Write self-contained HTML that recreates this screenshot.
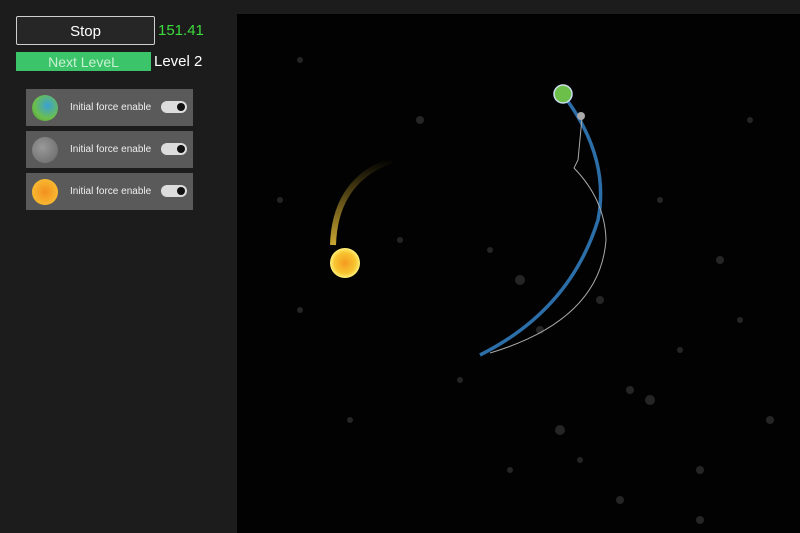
<!DOCTYPE html>
<html><head><style>
body{margin:0;width:800px;height:533px;background:#1c1c1c;position:relative;overflow:hidden;font-family:"Liberation Sans",sans-serif}
.canvas{position:absolute;left:237px;top:14px;width:563px;height:519px;background:#020202}
.stop{position:absolute;left:16px;top:16px;width:137px;height:27px;border:1px solid #cfcfcf;border-radius:2px;background:#262626;color:#fff;font-size:15px;text-align:center;line-height:29px}
.time{position:absolute;left:158px;top:22px;color:#3ddc3d;font-size:15px}
.next{position:absolute;left:16px;top:52px;width:135px;height:19px;background:#3cc46a;color:#c8f0d2;font-size:14px;text-align:center;line-height:20px}
.lvl{position:absolute;left:154px;top:53px;color:#fff;font-size:15px}
.row{position:absolute;left:26px;width:167px;height:37px;background:#5a5a5a}
.row .ic{position:absolute;left:6px;top:6px;width:26px;height:26px;border-radius:50%}
.row .t{position:absolute;left:44px;top:13px;color:#eee;font-size:10px}
.row .sw{position:absolute;left:135px;top:12px;width:26px;height:12px;border-radius:6px;background:#ddd}
.row .sw:after{content:"";position:absolute;right:2px;top:2px;width:8px;height:8px;border-radius:50%;background:#111}
</style></head><body>
<div class="canvas">
<svg width="563" height="519" viewBox="237 14 563 519" style="position:absolute;left:0;top:0">
<defs>
<radialGradient id="sun"><stop offset="0" stop-color="#f49a20"/><stop offset=".7" stop-color="#f8c530"/><stop offset="1" stop-color="#fff07a"/></radialGradient>
<linearGradient id="st" x1="0" y1="1" x2="0" y2="0"><stop offset="0" stop-color="#c9a630"/><stop offset="1" stop-color="#c9a630" stop-opacity="0"/></linearGradient>
</defs>
<g fill="#777" opacity=".3">
<circle cx="300" cy="60" r="3"/><circle cx="420" cy="120" r="4"/><circle cx="520" cy="280" r="5"/><circle cx="600" cy="300" r="4"/><circle cx="650" cy="400" r="5"/><circle cx="700" cy="470" r="4"/><circle cx="560" cy="430" r="5"/><circle cx="460" cy="380" r="3"/><circle cx="720" cy="260" r="4"/><circle cx="280" cy="200" r="3"/><circle cx="750" cy="120" r="3"/><circle cx="620" cy="500" r="4"/><circle cx="540" cy="330" r="4"/><circle cx="680" cy="350" r="3"/><circle cx="770" cy="420" r="4"/><circle cx="400" cy="240" r="3"/>
<circle cx="490" cy="250" r="3"/><circle cx="630" cy="390" r="4"/><circle cx="580" cy="460" r="3"/><circle cx="740" cy="320" r="3"/><circle cx="350" cy="420" r="3"/><circle cx="300" cy="310" r="3"/><circle cx="660" cy="200" r="3"/><circle cx="700" cy="520" r="4"/><circle cx="510" cy="470" r="3"/>
</g>
<path d="M392 160 Q335 180 333 245" stroke="url(#st)" stroke-width="6" fill="none"/>
<path d="M567 100 Q610 160 598 220 Q570 310 480 355" stroke="#2c6ea8" stroke-width="3.5" fill="none"/>
<path d="M582 118 L578 160 L574 168 Q605 200 606 240 Q600 320 490 353" stroke="#aaa" stroke-width="1" fill="none"/>
<circle cx="345" cy="263" r="15" fill="url(#sun)"/>
<circle cx="563" cy="94" r="9" fill="#6cc04a" stroke="#cde" stroke-width="1.5"/>
<circle cx="581" cy="116" r="4" fill="#aaa"/>
</svg>
</div>
<div class="stop">Stop</div>
<div class="time">151.41</div>
<div class="next">Next LeveL</div>
<div class="lvl">Level 2</div>
<div class="row" style="top:89px"><div class="ic" style="background:radial-gradient(circle at 60% 40%,#3aa0d8,#6cbf4a 60%,#4a8a3a)"></div><div class="t">Initial force enable</div><div class="sw"></div></div>
<div class="row" style="top:131px"><div class="ic" style="background:radial-gradient(circle at 40% 40%,#999,#666)"></div><div class="t">Initial force enable</div><div class="sw"></div></div>
<div class="row" style="top:173px"><div class="ic" style="background:radial-gradient(circle,#f29020,#f8b830 70%,#ffe070)"></div><div class="t">Initial force enable</div><div class="sw"></div></div>
</body></html>
